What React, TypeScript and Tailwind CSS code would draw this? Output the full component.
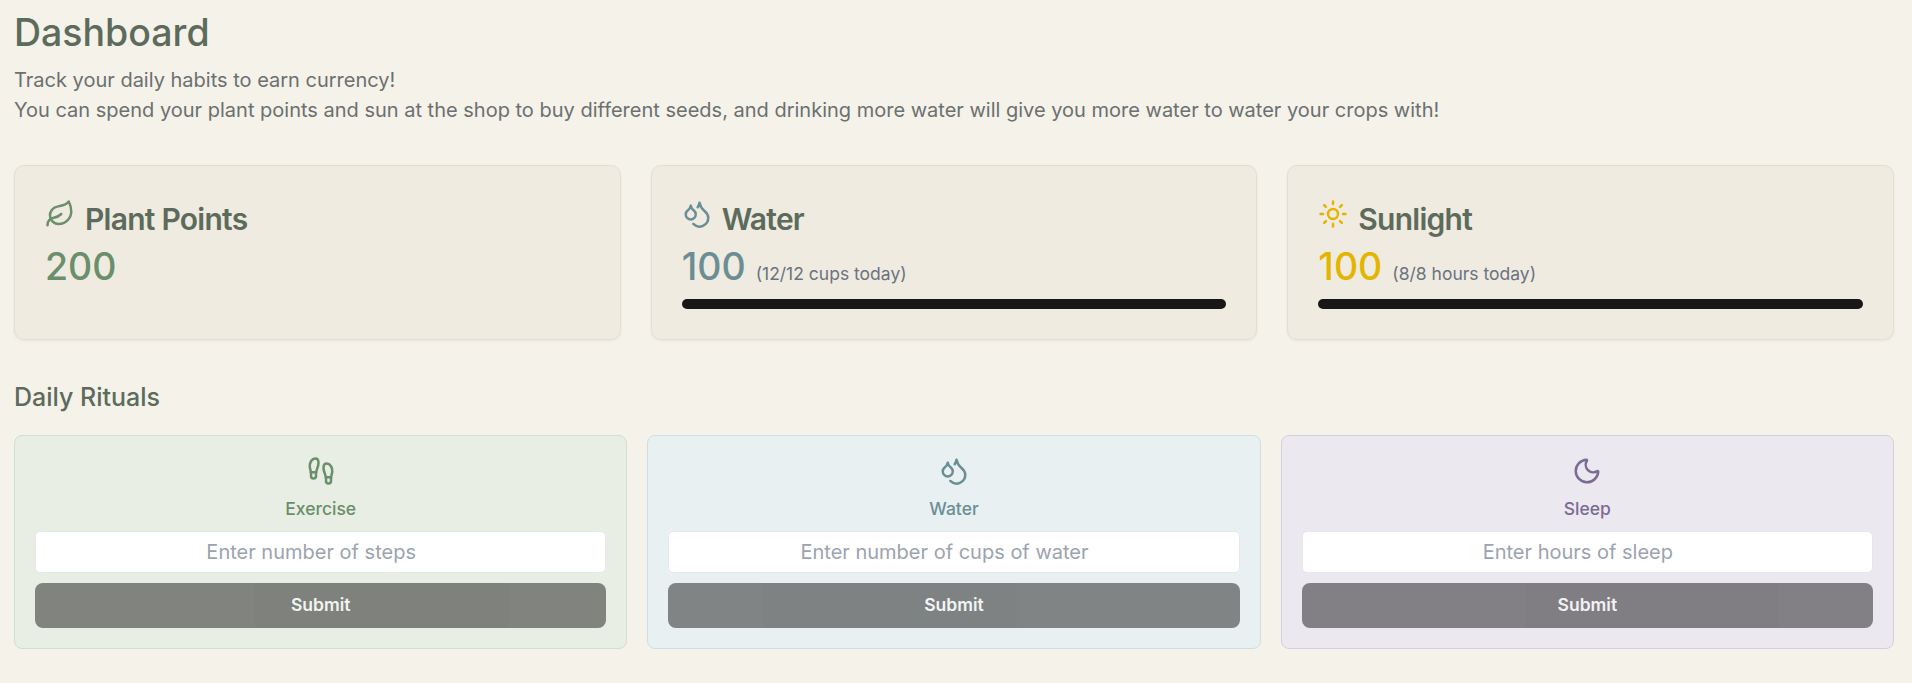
import React from "react";
import { Leaf, Droplets, Sun, Footprints, Moon } from "lucide-react";

const stats = [
  { title: "Plant Points", value: "200", note: "", Icon: Leaf, color: "text-[#6b8e6b]" },
  { title: "Water", value: "100", note: "(12/12 cups today)", Icon: Droplets, color: "text-[#6b8e95]" },
  { title: "Sunlight", value: "100", note: "(8/8 hours today)", Icon: Sun, color: "text-[#e4b500]" },
];

const rituals = [
  { title: "Exercise", hint: "Enter number of steps", Icon: Footprints, card: "bg-[#e8eee4] border-[#d0dfd3]", color: "text-[#6b8e6b]" },
  { title: "Water", hint: "Enter number of cups of water", Icon: Droplets, card: "bg-[#e8f0f2] border-[#cddfe4]", color: "text-[#6b8e95]" },
  { title: "Sleep", hint: "Enter hours of sleep", Icon: Moon, card: "bg-[#ece8f0] border-[#d4cfe0]", color: "text-[#7b6b95]" },
];

export default function App() {
  return (
    <div className="min-h-screen bg-[#f5f2e9] pt-2.5 pr-[18px] pl-3.5 font-['Inter',sans-serif] text-[#5c6b5c]">
      <header className="mb-10">
        <h1 className="mb-2.5 text-[37.5px] leading-[45px] font-medium">Dashboard</h1>
        <p className="text-xl leading-[30px] text-[#6b7070]">
          Track your daily habits to earn currency!
          <br />
          You can spend your plant points and sun at the shop to buy different seeds, and drinking more water will give you more water to water your crops with!
        </p>
      </header>
      <section className="mb-10 grid grid-cols-3 gap-[30px]">
        {stats.map(({ title, value, note, Icon, color }) => (
          <div key={title} className="h-[175px] rounded-[10px] border border-[#e3e0d1] bg-[#efebe0] p-[30px] shadow-[0_1px_3px_rgba(0,0,0,0.06)]">
            <div className="flex">
              <Icon className={"mt-[3px] mr-2.5 size-[30px] " + color} />
              <h2 className="pt-px text-[30px] leading-[45px] font-semibold tracking-[-0.75px]">{title}</h2>
            </div>
            <div className={"flex items-baseline gap-2.5 pt-0.5 text-[37.5px] leading-[45px] font-medium " + color}>
              {value}
              {note && <span className="text-[17.5px] leading-[25px] font-normal text-[#6b7280]">{note}</span>}
            </div>
            {note && <div className="mt-2.5 h-2.5 rounded-full bg-[#171717]" />}
          </div>
        ))}
      </section>
      <h2 className="mb-5 text-[25px] leading-[35px] font-medium">Daily Rituals</h2>
      <section className="grid grid-cols-3 gap-5">
        {rituals.map(({ title, hint, Icon, card, color }) => (
          <div key={title} className={"flex h-[214px] flex-col items-center rounded-lg border p-5 " + card}>
            <Icon className={"size-[30px] " + color} />
            <p className={"mt-2.5 text-[17.5px] leading-[25px] font-medium " + color}>{title}</p>
            <input type="number" placeholder={hint} className="mt-2.5 h-[42px] w-full rounded-[5px] border border-[#e5e7eb] bg-white pr-1 text-center text-xl placeholder:text-[#9ca3af]" />
            <button disabled className="mt-2.5 h-[45px] w-full rounded-lg bg-[#171717] text-[17.5px] font-semibold text-[#fafafa] opacity-50">Submit</button>
          </div>
        ))}
      </section>
    </div>
  );
}
